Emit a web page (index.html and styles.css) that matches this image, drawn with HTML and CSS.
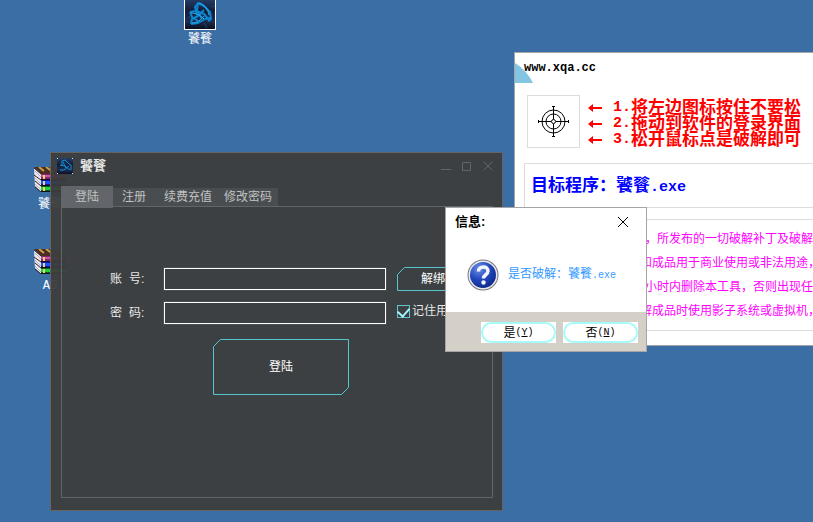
FILE: index.html
```html
<!DOCTYPE html>
<html lang="zh-CN">
<head>
<meta charset="utf-8">
<title>饕餮</title>
<link rel="stylesheet" href="styles.css">
</head>
<body>
<svg width="0" height="0" class="defs" aria-hidden="true">
  <defs>
    <linearGradient id="navy" x1="0" y1="0" x2="0" y2="1">
      <stop offset="0" stop-color="#26406c"/><stop offset=".4" stop-color="#141e3c"/><stop offset=".75" stop-color="#1c2c50"/><stop offset="1" stop-color="#0b1021"/>
    </linearGradient>
    <radialGradient id="ball" cx=".35" cy=".25" r=".85">
      <stop offset="0" stop-color="#6f8fe6"/><stop offset=".5" stop-color="#2148bd"/><stop offset="1" stop-color="#0d2381"/>
    </radialGradient>
    <symbol id="swirl" viewBox="0 0 32 32">
      <rect width="32" height="32" fill="#fff"/>
      <rect x="1" width="30" height="31" fill="url(#navy)"/>
      <path d="M18 1l-1 4M27 9l4-1M20 25l3 5M3 20l4-2" stroke="#16486f" fill="none"/>
      <g fill="none" stroke="#0d86cf" stroke-width="2" stroke-linejoin="round">
        <path d="M13 17L11 9l3-4 6 3 6 6 1 7-3 2"/>
        <path d="M14 5l-1 7 5 9"/>
        <path d="M6 14l6-1 8 3 6 7M6 14l2 5 6 4"/>
        <path d="M7 26l1-5 6-3 6-6M7 26l7-1 7-4 5-1"/>
      </g>
      <path d="M15 5c5 1 9 6 10 12M8 25c5 0 9-3 12-7M7 15c6 0 10 3 13 6" fill="none" stroke="#2bb0ee"/>
    </symbol>
    <symbol id="swirl-mini" viewBox="0 0 16 16">
      <rect width="16" height="16" fill="#dfe6ef"/>
      <path d="M1 0h14v1h1v14h-1v1H1v-1H0V1h1z" fill="url(#navy)"/>
      <path d="M5 8V3l3-1 4 4 2 1v5M3 7l5 1 5 4M3 12h4l5-4M6 4l3 6" fill="none" stroke="#1791d4"/>
    </symbol>
    <symbol id="books" viewBox="0 0 32 25">
      <path d="M0 0h18l14 7H7z" fill="#4b2d22"/>
      <path d="M5 0l5 4M12 0l7 5" stroke="#c9a24a" stroke-width="2"/>
      <path d="M0 1l7 6v18l-6-6z" fill="#e8e8ee"/>
      <path d="M1 4l6 6M1 11l6 6M1 17l6 6" stroke="#b4b4c0"/>
      <path d="M0 1l7 6M0 8l7 5M1 14l6 5M1 20l6 5" stroke="#3a1f24"/>
      <path d="M7 7h25v6H7z" fill="#8d2473"/><path d="M7 8h25v2H7z" fill="#c65aa6"/>
      <path d="M7 13h25v6H7z" fill="#0b1ca4"/><path d="M7 14h25v3H7z" fill="#1e52ff"/>
      <path d="M7 19h25v6H7z" fill="#086018"/><path d="M7 20h25v3H7z" fill="#1fd245"/>
      <path d="M7 12.500h25M7 18.500h25M7 24.500h25" stroke="#15101c"/>
      <path d="M10 8v4M10 14v4M10 20v4" stroke="#f2d36a" stroke-width="2"/>
    </symbol>
  </defs>
</svg>

<main class="desktop">
  <div class="shortcut shortcut-app"><svg class="swirl-lg"><use href="#swirl"/></svg><span>饕餮</span></div>
  <div class="shortcut shortcut-rar1"><svg class="books"><use href="#books"/></svg><span>饕餮</span></div>
  <div class="shortcut shortcut-rar2"><svg class="books"><use href="#books"/></svg><span class="latin">AS</span></div>

  <section class="window login-window">
    <header class="login-bar">
      <svg class="swirl-sm"><use href="#swirl-mini"/></svg>
      <h1>饕餮</h1>
      <div class="controls">
        <button aria-label="最小化"><svg viewBox="0 0 10 10"><path d="M0 8.500h10"/></svg></button>
        <button aria-label="最大化"><svg viewBox="0 0 10 10"><path d="M.5 1.500h8v8h-8z"/></svg></button>
        <button aria-label="关闭"><svg viewBox="0 0 10 10"><path d="M.5 .5l9 9M9.500 .5l-9 9"/></svg></button>
      </div>
    </header>
    <nav class="tabs">
      <button class="tab active">登陆</button>
      <button class="tab">注册</button>
      <button class="tab">续费充值</button>
      <button class="tab">修改密码</button>
    </nav>
    <form class="panel">
      <div class="row">
        <label for="user"><span>账</span><span>号:</span></label>
        <input id="user" type="text">
        <button type="button" class="cut bind"><svg viewBox="0 0 72 24" preserveAspectRatio="none"><path d="M7.500 .5H71.500V17l-6.500 6.500H.5V7.500z"/></svg><span>解绑</span></button>
      </div>
      <div class="row">
        <label for="pass"><span>密</span><span>码:</span></label>
        <input id="pass" type="password">
        <div class="remember"><input id="keep" type="checkbox" checked><label for="keep">记住用户</label></div>
      </div>
      <button type="button" class="cut login"><svg viewBox="0 0 136 56" preserveAspectRatio="none"><path d="M7.500 .5H135.500V48.500l-7 7H.5V7.500z"/></svg><span>登陆</span></button>
    </form>
  </section>

  <section class="window tool-window">
    <svg class="corner" viewBox="0 0 18 20"><path d="M0 0C7 4 14 12 18 20H0z"/></svg>
    <h2 class="site">www.xqa.cc</h2>
    <div class="guide">
      <div class="target">
        <svg viewBox="0 0 31 31"><circle cx="15.500" cy="15.500" r="11.500"/><circle cx="15.500" cy="15.500" r="7.500"/><circle cx="15.500" cy="15.500" r="2"/><path d="M15.500 0v13M15.500 18v13M0 15.500h13M18 15.500h13M14 .5h3M14 30.500h3M.5 14v3M30.500 14v3"/></svg>
      </div>
      <ol class="steps">
        <li><svg viewBox="0 0 14 10"><path d="M0 5l5-4v3h9v2H5v3z"/></svg><b>1.</b>将左边图标按住不要松</li>
        <li><svg viewBox="0 0 14 10"><path d="M0 5l5-4v3h9v2H5v3z"/></svg><b>2.</b>拖动到软件的登录界面</li>
        <li><svg viewBox="0 0 14 10"><path d="M0 5l5-4v3h9v2H5v3z"/></svg><b>3.</b>松开鼠标点是破解即可</li>
      </ol>
    </div>
    <p class="box program">目标程序：饕餮<b>.exe</b></p>
    <div class="box notice">
      <p class="inset">，所发布的一切破解补丁及破解</p>
      <p>和成品用于商业使用或非法用途，</p>
      <p class="inset">小时内删除本工具，否则出现任</p>
      <p>解成品时使用影子系统或虚拟机，</p>
    </div>
  </section>

  <section class="window dialog" role="dialog" aria-labelledby="info">
    <header class="dialog-bar">
      <h2 id="info">信息:</h2>
      <button aria-label="关闭"><svg viewBox="0 0 10 10"><path d="M0 0l10 10M10 0L0 10"/></svg></button>
    </header>
    <div class="message">
      <svg viewBox="0 0 32 32">
        <circle cx="16" cy="16" r="15.500" fill="#77777f"/>
        <circle cx="16" cy="16" r="14.500" fill="#e9e9ec"/>
        <circle cx="16" cy="16" r="13" fill="url(#ball)"/>
        <path d="M11.500 12.500c0-6 9.500-6 9.500-.5 0 4-4.500 3.500-4.500 7.500" fill="none" stroke="#f4f6ff" stroke-width="3.500"/>
        <circle cx="16.500" cy="23.500" r="2.200" fill="#f4f6ff"/>
      </svg>
      <p>是否破解：饕餮<span class="latin">.exe</span></p>
    </div>
    <footer>
      <button><span class="pill">是<span class="key">(<u>Y</u>)</span></span></button>
      <button><span class="pill">否<span class="key">(<u>N</u>)</span></span></button>
    </footer>
  </section>
</main>
</body>
</html>
```

FILE: styles.css
```css
* { box-sizing: border-box; }

body {
  margin: 0;
  font: 12px/16px "Liberation Sans", "Noto Sans CJK SC", sans-serif;
}

h1, h2, p, ol { margin: 0; padding: 0; }

button {
  border: 0;
  padding: 0;
  background: none;
  color: inherit;
  font: inherit;
}

svg { display: block; }
.defs { position: absolute; }
.latin { font-family: "Liberation Mono", monospace; font-size: 10px; }

.desktop {
  position: relative;
  min-height: 100vh;
  overflow: hidden;
  background: #3b6ea5;
}

/* Desktop shortcuts */
.shortcut {
  position: absolute;
  display: flex;
  flex-direction: column;
  align-items: center;
  width: 32px;
  color: #fff;
}
.shortcut-app { left: 184px; top: -2px; }
.shortcut-rar1 { left: 34px; top: 167px; }
.shortcut-rar2 { left: 34px; top: 249px; }
.swirl-lg { width: 32px; height: 32px; }
.swirl-sm { width: 16px; height: 16px; }
.books { width: 32px; height: 25px; }
.shortcut span { line-height: 18px; }
.shortcut .books + span { padding-top: 3px; }
.shortcut .latin { font-size: 12px; }

.window { position: absolute; }

/* Login window */
.login-window {
  left: 50px;
  top: 152px;
  width: 453px;
  padding: 0 9px 12px 10px;
  border: 1px solid #666463;
  background: rgba(60, 61, 60, 0.95);
  color: #e8e8e8;
}
.login-bar {
  display: flex;
  align-items: center;
  height: 33px;
  margin-left: -4px;
  padding-bottom: 8px;
  gap: 7px;
}
.login-bar h1 { flex: 1; font-size: 13px; }
.controls { display: flex; gap: 11px; }
.controls svg { width: 10px; height: 10px; fill: none; stroke: #626567; }

.tabs {
  display: flex;
  align-items: center;
  width: 218px;
  color: #bfc1c2;
}
.tab { flex: none; height: 18px; padding: 0 6px; background: #4a4d4f; }
.tab:nth-child(2) { padding: 0 9px; }
.tab:nth-child(3) { padding-left: 9px; }
.tab.active { width: 52px; height: 22px; background: #626569; }

.panel {
  min-height: 292px;
  margin-top: -2px;
  padding: 60px 0 0 48px;
  border: 1px solid #626567;
}
.row {
  display: flex;
  align-items: center;
  height: 24px;
  margin-bottom: 10px;
}
.row > label { display: flex; gap: 7px; width: 54px; }
.row > input {
  width: 222px;
  height: 22px;
  margin-right: 11px;
  border: 1px solid #fff;
  outline: 1px solid #4b4e50;
  background: transparent;
  color: #fff;
}
.remember {
  display: flex;
  align-items: center;
  gap: 2px;
  padding-bottom: 4px;
  white-space: nowrap;
}
.remember input {
  appearance: none;
  display: flex;
  justify-content: center;
  width: 13px;
  height: 13px;
  margin: 0;
  border: 1px solid #5fc4cc;
}
.remember input:checked::after {
  content: "";
  width: 10px;
  height: 6px;
  margin-top: 1px;
  border: solid #a8f4fa;
  border-width: 0 0 2px 2px;
  transform: rotate(-48deg);
}
.cut { display: grid; place-items: center; color: #fff; }
.cut > * { grid-area: 1 / 1; }
.cut svg { width: 100%; height: 100%; fill: none; stroke: #55c5ce; }
.bind { width: 72px; height: 24px; }
.login { width: 136px; height: 56px; margin: 14px 0 0 103px; }

/* Tool window */
.tool-window {
  left: 514px;
  right: -12px;
  top: 52px;
  padding: 7px 0 14px 9px;
  border: 1px solid #a5a5a5;
  background: #fff;
}
.corner {
  position: absolute;
  left: 0;
  top: 10px;
  width: 18px;
  height: 20px;
  fill: #84c5e2;
}
.site {
  position: relative;
  font: bold 12px/16px "Liberation Mono", monospace;
}
.guide { display: flex; gap: 8px; padding: 19px 0 15px 3px; }
.target {
  display: grid;
  place-items: center;
  width: 53px;
  height: 53px;
  border: 1px solid #dcdcdc;
}
.target svg { width: 31px; height: 31px; fill: none; stroke: #000; }
.steps {
  padding-top: 5px;
  list-style: none;
  color: #f00;
  font-size: 17px;
  font-weight: bold;
  line-height: 16px;
  white-space: nowrap;
}
.steps li { display: flex; align-items: center; height: 16px; }
.steps svg { width: 14px; height: 10px; margin-right: 11px; fill: #f00; }
.steps b, .program b { font-family: "Liberation Mono", monospace; font-size: 15px; }
.box { border: 1px solid #dcdcdc; white-space: nowrap; }
.program {
  height: 45px;
  padding-left: 6px;
  color: #00f;
  font-size: 17px;
  font-weight: bold;
  line-height: 44px;
}
.notice {
  margin-top: 11px;
  padding: 7px 0 7px 115px;
  color: #f0f;
  line-height: 24px;
}
.inset { padding-left: 5px; }

/* Message dialog */
.dialog {
  left: 445px;
  top: 207px;
  width: 202px;
  border: 1px solid #a5a5a5;
  background: #fff;
}
.dialog-bar {
  display: flex;
  justify-content: space-between;
  padding: 5px 18px 0 9px;
}
.dialog-bar h2 { font-size: 13px; line-height: 18px; }
.dialog-bar svg { width: 10px; height: 10px; stroke: #000; overflow: visible; }
.message {
  display: flex;
  align-items: center;
  gap: 9px;
  height: 81px;
  padding: 7px 0 0 21px;
  color: #39f;
}
.message svg { width: 32px; height: 32px; }
.dialog footer {
  display: flex;
  justify-content: flex-end;
  gap: 7px;
  padding: 10px 8px 8px;
  background: #d4d0c8;
}
.dialog footer button { width: 75px; height: 21px; background: #fff; }
.pill {
  display: flex;
  justify-content: center;
  align-items: center;
  height: 21px;
  border: 2px solid #a5fafa;
  border-radius: 11px;
}
.key { font: 10px/16px "Liberation Mono", monospace; }
```
